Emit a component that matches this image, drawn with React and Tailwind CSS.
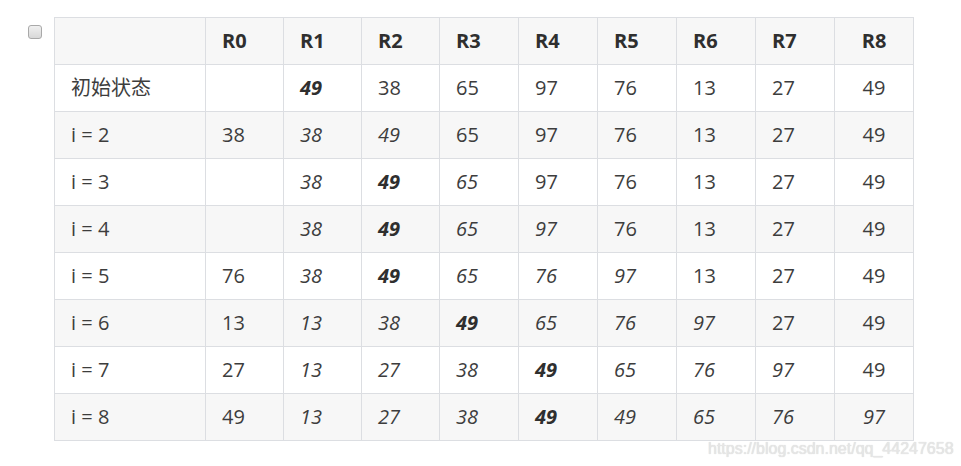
import React from 'react';

// n = normal, i = italic, b = bold italic
const headers = ['', 'R0', 'R1', 'R2', 'R3', 'R4', 'R5', 'R6', 'R7', 'R8'];

const rows = [
  ['初始状态', ['', 'n'], ['49', 'b'], ['38', 'n'], ['65', 'n'], ['97', 'n'], ['76', 'n'], ['13', 'n'], ['27', 'n'], ['49', 'n']],
  ['i = 2', ['38', 'n'], ['38', 'i'], ['49', 'i'], ['65', 'n'], ['97', 'n'], ['76', 'n'], ['13', 'n'], ['27', 'n'], ['49', 'n']],
  ['i = 3', ['', 'n'], ['38', 'i'], ['49', 'b'], ['65', 'i'], ['97', 'n'], ['76', 'n'], ['13', 'n'], ['27', 'n'], ['49', 'n']],
  ['i = 4', ['', 'n'], ['38', 'i'], ['49', 'b'], ['65', 'i'], ['97', 'i'], ['76', 'n'], ['13', 'n'], ['27', 'n'], ['49', 'n']],
  ['i = 5', ['76', 'n'], ['38', 'i'], ['49', 'b'], ['65', 'i'], ['76', 'i'], ['97', 'i'], ['13', 'n'], ['27', 'n'], ['49', 'n']],
  ['i = 6', ['13', 'n'], ['13', 'i'], ['38', 'i'], ['49', 'b'], ['65', 'i'], ['76', 'i'], ['97', 'i'], ['27', 'n'], ['49', 'n']],
  ['i = 7', ['27', 'n'], ['13', 'i'], ['27', 'i'], ['38', 'i'], ['49', 'b'], ['65', 'i'], ['76', 'i'], ['97', 'i'], ['49', 'n']],
  ['i = 8', ['49', 'n'], ['13', 'i'], ['27', 'i'], ['38', 'i'], ['49', 'b'], ['49', 'i'], ['65', 'i'], ['76', 'i'], ['97', 'i']],
];

const widths = [151, 78, 78, 78, 79, 79, 79, 79, 79, 79];

const styleFor = (kind) => {
  if (kind === 'b') return 'italic font-bold text-[#2f2f2f]';
  if (kind === 'i') return 'italic';
  return '';
};

const App = () => {
  return (
    <div className="relative w-[961px] h-[466px] bg-white overflow-hidden font-['Open_Sans','Noto_Sans_CJK_SC',sans-serif] text-[20px] text-[#3d3d3d]">
      <div className="flex items-start pl-[28px] pt-[17px]">
        <div className="mt-[8px] mr-[12px] w-[14px] h-[14px] rounded-[3px] border border-[#a9a9a9] bg-gradient-to-b from-[#f0f0f0] to-[#d8d8d8]"></div>
        <table className="table-fixed border-collapse w-[860px]">
          <colgroup>
            {widths.map((w, i) => (
              <col key={i} style={{ width: w }} />
            ))}
          </colgroup>
          <thead>
            <tr className="bg-[#f7f7f7] h-[47px]">
              {headers.map((h, i) => (
                <th
                  key={i}
                  className={`border border-[#dcdee2] px-[16px] font-bold text-[#2f2f2f] ${i === 9 ? 'text-center' : 'text-left'}`}
                >
                  {h}
                </th>
              ))}
            </tr>
          </thead>
          <tbody>
            {rows.map((row, r) => (
              <tr key={r} className={`h-[47px] ${r % 2 === 1 ? 'bg-[#f7f7f7]' : 'bg-white'}`}>
                <td className="border border-[#dcdee2] px-[16px] text-left">{row[0]}</td>
                {row.slice(1).map(([v, k], c) => (
                  <td
                    key={c}
                    className={`border border-[#dcdee2] px-[16px] ${c === 8 ? 'text-center' : 'text-left'} ${styleFor(k)}`}
                  >
                    {v}
                  </td>
                ))}
              </tr>
            ))}
          </tbody>
        </table>
      </div>
      {/* blog watermark */}
      <div className="absolute left-[708px] top-[437px] font-['Liberation_Sans',sans-serif] text-[16px] text-[#e6e6e6] [text-shadow:0_0_1px_#d0d0d0]">
        https://blog.csdn.net/qq_44247658
      </div>
    </div>
  );
};

export default App;
